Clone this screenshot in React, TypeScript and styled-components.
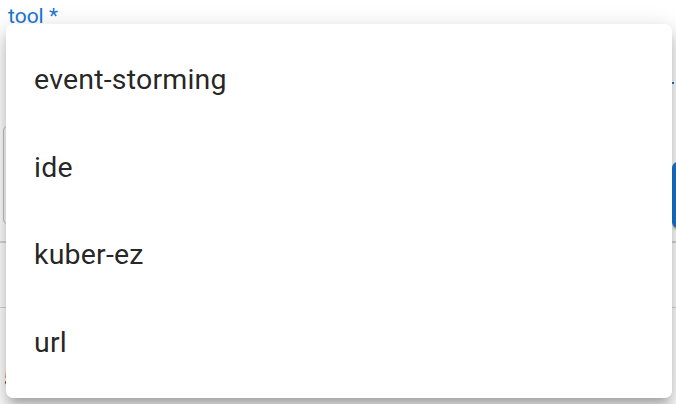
import React from "react";
import styled, { createGlobalStyle } from "styled-components";

const Global = createGlobalStyle`
  html, body { margin: 0; padding: 0; background: #fff; }
  body { font-family: Roboto, "Liberation Sans", sans-serif; width: 676px; height: 404px; overflow: hidden; }
`;

const Page = styled.div`
  position: relative;
  width: 676px;
  height: 404px;
  overflow: hidden;
  display: flex;
  flex-direction: column;
`;

const SelectField = styled.div`
  display: flex;
  flex-direction: column;
  height: 84px;
  box-sizing: border-box;
  margin: 0 2px 0 8px;
  border-bottom: 2px solid #1976d2;
  padding-top: 4px;
`;

const FieldLabel = styled.label`
  font-size: 21px;
  line-height: 24px;
  color: #1976d2;
`;

const InputRow = styled.div`
  display: flex;
  align-items: flex-end;
  gap: 16px;
  margin-top: 41px;
  padding-left: 3px;
`;

const Outlined = styled.div`
  flex: 1;
  height: 100px;
  box-sizing: border-box;
  border: 1.5px solid #c4c4c4;
  border-radius: 6px;
`;

const AddButton = styled.div`
  width: 120px;
  height: 66px;
  margin-right: -116px;
  margin-bottom: -3px;
  background: #1976d2;
  border-radius: 6px;
  box-shadow: 0 3px 2px -1px rgba(0, 0, 0, 0.2), 0 2px 3px rgba(0, 0, 0, 0.14);
`;

const Divider = styled.div<{ $gap: number }>`
  margin-top: ${(p) => p.$gap}px;
  height: 1.5px;
  background: #d6d6d6;
`;

const Footnote = styled.div`
  margin-top: 58px;
  margin-left: -9px;
  font-size: 22px;
  color: rgba(0, 0, 0, 0.87);
`;

const Paper = styled.div`
  position: absolute;
  left: 6px;
  top: 24px;
  width: 666px;
  height: 374px;
  background: #fff;
  border-radius: 7px;
  box-shadow:
    0px 8px 8px -5px rgba(0, 0, 0, 0.2),
    0px 13px 16px 2px rgba(0, 0, 0, 0.14),
    0px 5px 22px 3px rgba(0, 0, 0, 0.12);
  overflow: hidden;
`;

const MenuList = styled.ul`
  list-style: none;
  margin: 0;
  padding: 12px 0;
  display: flex;
  flex-direction: column;
`;

const MenuItem = styled.li`
  height: 87.5px;
  display: flex;
  align-items: center;
  padding-left: 28px;
  font-size: 28.5px;
  letter-spacing: 0.2px;
  color: rgba(0, 0, 0, 0.87);
`;

const options = ["event-storming", "ide", "kuber-ez", "url"];

export default function App() {
  return (
    <>
      <Global />
      <Page>
        <SelectField>
          <FieldLabel>tool *</FieldLabel>
        </SelectField>
        <InputRow>
          <Outlined />
          <AddButton />
        </InputRow>
        <Divider $gap={16} />
        <Divider $gap={64} />
        <Footnote>15</Footnote>
        <Paper>
          <MenuList role="listbox">
            {options.map((o) => (
              <MenuItem key={o} role="option">
                {o}
              </MenuItem>
            ))}
          </MenuList>
        </Paper>
      </Page>
    </>
  );
}
